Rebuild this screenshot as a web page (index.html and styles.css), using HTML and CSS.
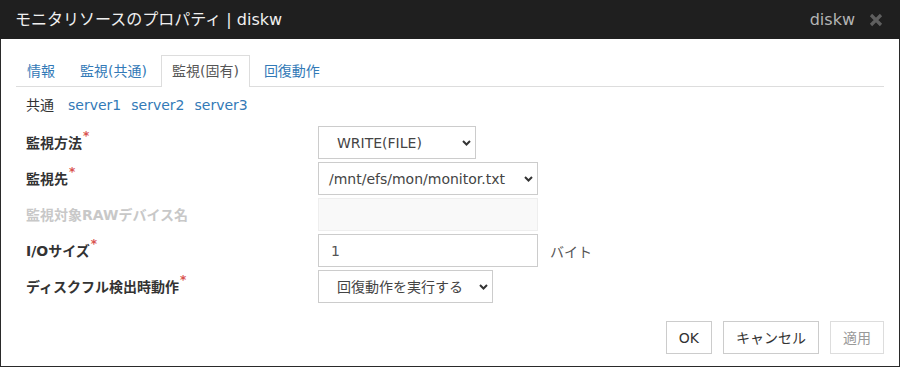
FILE: index.html
```html
<!DOCTYPE html>
<html lang="ja">
<head>
<meta charset="utf-8">
<title>モニタリソースのプロパティ</title>
<link rel="stylesheet" href="styles.css">
</head>
<body>
<div class="dialog">
  <div class="titlebar">
    <span class="title">モニタリソースのプロパティ | diskw</span>
    <span class="title-right">
      <span class="title-name">diskw</span>
      <svg class="close" width="14" height="14" viewBox="0 0 14 14"><path d="M2 2 L12 12 M12 2 L2 12" stroke="#5f5f5f" stroke-width="3.2" stroke-linecap="butt"/></svg>
    </span>
  </div>
  <div class="body">
    <div class="tabs">
      <a class="tab">情報</a>
      <a class="tab">監視(共通)</a>
      <a class="tab active">監視(固有)</a>
      <a class="tab">回復動作</a>
    </div>
    <div class="subnav">
      <span class="sub-current">共通</span>
      <a class="sub-link">server1</a>
      <a class="sub-link">server2</a>
      <a class="sub-link">server3</a>
    </div>
    <div class="form">
      <div class="row">
        <div class="label">監視方法<span class="req">*</span></div>
        <div class="field select w158 pad-wide"><span>WRITE(FILE)</span><svg class="chev" width="9" height="6" viewBox="0 0 9 6"><path d="M1 1 L4.5 4.5 L8 1" fill="none" stroke="#333" stroke-width="2"/></svg></div>
      </div>
      <div class="row">
        <div class="label">監視先<span class="req">*</span></div>
        <div class="field select w220"><span>/mnt/efs/mon/monitor.txt</span><svg class="chev" width="9" height="6" viewBox="0 0 9 6"><path d="M1 1 L4.5 4.5 L8 1" fill="none" stroke="#333" stroke-width="2"/></svg></div>
      </div>
      <div class="row">
        <div class="label disabled">監視対象RAWデバイス名</div>
        <div class="field input w220 is-disabled"></div>
      </div>
      <div class="row">
        <div class="label">I/Oサイズ<span class="req">*</span></div>
        <div class="field input w220"><span>1</span></div>
        <span class="unit">バイト</span>
      </div>
      <div class="row">
        <div class="label">ディスクフル検出時動作<span class="req">*</span></div>
        <div class="field select w175 pad-wide"><span>回復動作を実行する</span><svg class="chev" width="9" height="6" viewBox="0 0 9 6"><path d="M1 1 L4.5 4.5 L8 1" fill="none" stroke="#333" stroke-width="2"/></svg></div>
      </div>
    </div>
    <div class="footer">
      <button class="btn">OK</button>
      <button class="btn">キャンセル</button>
      <button class="btn btn-disabled">適用</button>
    </div>
  </div>
</div>
</body>
</html>
```
FILE: styles.css
```css
* { box-sizing: border-box; }
html, body { margin: 0; padding: 0; background: #fff; }
body {
  font-family: "DejaVu Sans", "Noto Sans CJK JP", sans-serif;
  font-size: 14px;
  color: #333;
}
.dialog {
  width: 900px;
  height: 367px;
  border: 1px solid #2a2a2a;
  border-top: none;
  display: flex;
  flex-direction: column;
  background: #fff;
}
.titlebar {
  height: 39px;
  background: #1f1f1f;
  display: flex;
  align-items: center;
  justify-content: space-between;
  padding: 0 17px 0 15px;
  margin: 0 -1px;
}
.title {
  color: #f0f0f0;
  font-size: 16px;
  line-height: 20px;
}
.title-right {
  display: flex;
  align-items: center;
  gap: 14px;
}
.title-name {
  color: #b4b4b4;
  font-size: 16px;
  line-height: 20px;
}
.close { display: block; }
.body {
  flex: 1;
  padding: 16px 15px 0 15px;
  display: flex;
  flex-direction: column;
}
.tabs {
  display: flex;
  border-bottom: 1px solid #dddddd;
  height: 32px;
}
.tab {
  display: block;
  height: 32px;
  line-height: 30px;
  padding: 0 10px;
  border: 1px solid transparent;
  border-bottom: none;
  margin-right: 3px;
  color: #337ab7;
  white-space: nowrap;
}
.tab.active {
  color: #555;
  border-color: #dddddd;
  background: #fff;
}
.subnav {
  display: flex;
  align-items: center;
  padding: 8px 10px 0;
  line-height: 20px;
  gap: 10px;
}
.sub-current { color: #333; margin-right: 4px; }
.sub-link { color: #337ab7; }
.form {
  margin-top: 11px;
  display: flex;
  flex-direction: column;
  gap: 3px;
}
.row {
  display: flex;
  align-items: center;
  height: 33px;
}
.label {
  width: 302px;
  padding-left: 10px;
  font-weight: bold;
  color: #333;
  line-height: 20px;
  white-space: nowrap;
}
.label.disabled { color: #c8c8c8; }
.req {
  color: #d9534f;
  font-size: 12px;
  vertical-align: top;
  line-height: 12px;
  position: relative;
  top: -3px;
  margin-left: 1px;
}
.field {
  height: 33px;
  border: 1px solid #cccccc;
  background: #fff;
  display: flex;
  align-items: center;
  color: #444;
  line-height: 20px;
  white-space: nowrap;
}
.select { justify-content: space-between; padding: 0 4px 0 10px; }
.select.pad-wide { padding-left: 18px; }
.input { padding: 0 12px; color: #555; }
.is-disabled { background: #f9f9f9; border-color: #eeeeee; }
.w158 { width: 158px; }
.w220 { width: 220px; }
.w175 { width: 175px; }
.chev { display: block; flex: none; }
.unit { margin-left: 12px; color: #555; }
.footer {
  margin-top: 18px;
  display: flex;
  justify-content: flex-end;
  gap: 11px;
}
.btn {
  font-family: inherit;
  font-size: 14px;
  height: 33px;
  padding: 0 12px;
  border: 1px solid #cccccc;
  background: #fff;
  color: #333;
  line-height: 20px;
  border-radius: 0;
}
.btn-disabled { color: #999; border-color: #dddddd; }
```
